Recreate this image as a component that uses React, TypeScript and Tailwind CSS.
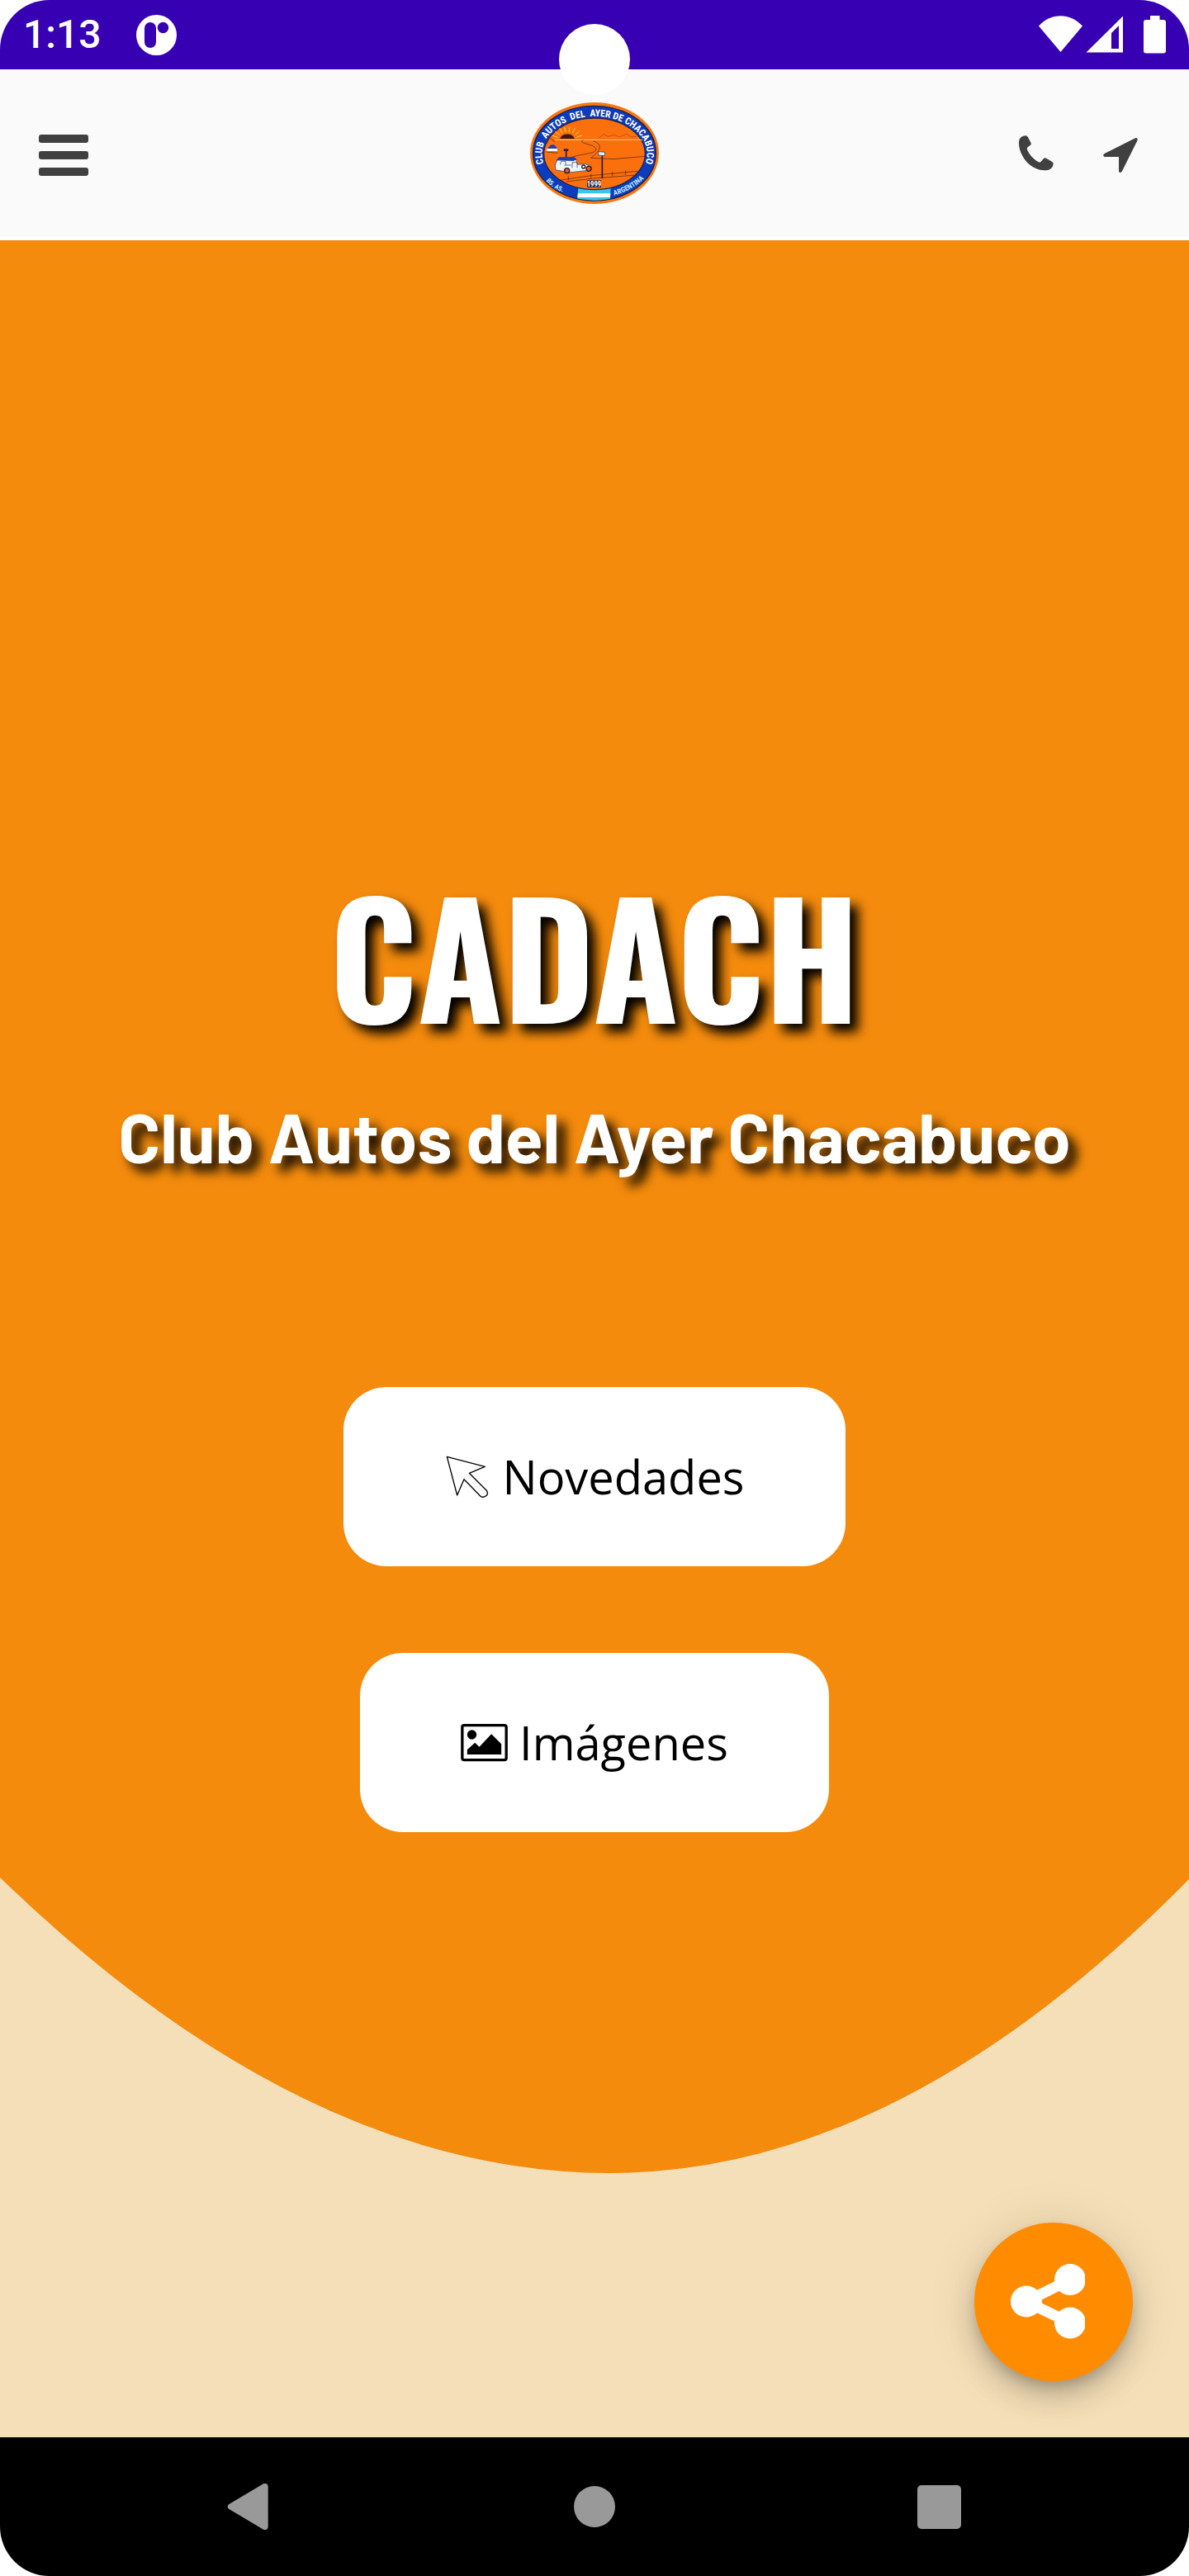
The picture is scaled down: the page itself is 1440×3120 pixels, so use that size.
import type { ReactNode } from "react";

function StatusBar() {
  return (
    <div className="flex h-[84px] items-center justify-between bg-[#3700b3] px-[28px] text-white">
      <div className="flex items-center gap-[42px]">
        <span className="font-['Roboto',sans-serif] text-[48px] font-medium leading-[56px]">1:13</span>
        <svg viewBox="0 0 49 49" className="size-[49px]" aria-hidden="true">
          <circle cx="24.5" cy="24.5" r="24.5" fill="#fff" />
          <rect x="10" y="9" width="14" height="31" rx="7" fill="#3700b3" />
          <circle cx="32.5" cy="15.5" r="6.7" fill="#3700b3" />
        </svg>
      </div>
      <svg viewBox="1258 19 154 46" className="h-[46px] w-[154px]" fill="#fff" aria-hidden="true">
        <path d="M1284.500 63 L1258 31.500 C1273 15 1296 15 1311 31.500 Z" />
        <path fillRule="evenodd" d="M1315.500 63.500 L1360 63.500 L1360 19.500 Z M1346 40 L1346 59 L1355 59 L1355 31 Z" />
        <path d="M1393 19 H1404.500 V24 H1409 Q1412 24 1412 27 V61.500 Q1412 64.500 1409 64.500 H1388 Q1385 64.500 1385 61.500 V27 Q1385 24 1388 24 H1393 Z" />
      </svg>
    </div>
  );
}

function ClubLogo() {
  return (
    <svg viewBox="69 372 468 369" className="h-[123px] w-[156px]" role="img" aria-label="Club Autos del Ayer de Chacabuco">
      <defs>
        <path id="arc-top" d="M125 608 A191 136 0 1 1 481 608" />
        <path id="arc-left" d="M127 657 Q152 687 192 699" />
        <path id="arc-right" d="M374 710 Q440 692 482 650" />
        <clipPath id="ring">
          <ellipse cx="303" cy="557" rx="222" ry="171" />
        </clipPath>
      </defs>
      <ellipse cx="303" cy="556.500" rx="234" ry="184.500" fill="#f9760f" />
      <ellipse cx="303" cy="557" rx="223" ry="172" fill="#0d3bbd" stroke="#15214e" strokeWidth="4" />
      <g clipPath="url(#ring)">
        <path d="M244 680 L362 680 L359 740 L239 740 Z" fill="#38c6ec" />
        <path d="M243 703 H361 L360 717 H241 Z" fill="#fff" />
      </g>
      <ellipse cx="303" cy="559" rx="184" ry="130" fill="#fb700d" stroke="#1b2354" strokeWidth="4" />
      <g stroke="#4a2012" fill="none" strokeWidth="2">
        <path d="M158 508 H478" stroke="#ffc17a" strokeWidth="3" />
        <path d="M262 508 C240 522 300 522 308 540 C312 560 262 556 212 574" />
        <path d="M300 512 C340 530 318 552 290 574 L372 578 L486 568" />
        <path d="M318 502 L336 488 L352 496 L374 490 L394 498 L420 486 L436 498 L456 496" stroke="#b5430a" />
        <path d="M170 500 L150 492 M176 490 L160 478 M186 483 L176 466 M198 480 L194 462 M210 480 L213 462 M222 483 L232 467 M232 490 L247 478 M238 498 L258 492" stroke="#ffd84a" strokeWidth="3" />
        <path d="M128 524 L140 500 L160 516 M128 552 L170 556" />
        <path d="M176 655 L290 638 L460 622 M200 660 L300 648 L455 636 M208 640 V655 M290 632 V648 M368 624 V640 M416 620 V636" />
      </g>
      <path d="M178 504 C184 482 224 482 230 504 Z" fill="#3a1a14" />
      <path d="M131 540 L146 526 H156 L169 540 Z" fill="#1c3fb4" />
      <path d="M129 540 H168 V549 H129 Z" fill="#fff" />
      <path d="M200 548 V574 M331 562 V648" stroke="#2c1a2c" strokeWidth="5" />
      <path d="M191 541 H208 V549 H191 Z" fill="#25254a" />
      <path d="M317 551 L341 553 L340 566 L318 564 Z" fill="#dff3fb" stroke="#25254a" strokeWidth="2" />
      <path d="M160 600 L168 580 H236 L242 598 L270 596 L292 606 L290 618 L218 626 L162 618 Z" fill="#eef6fb" stroke="#26305e" strokeWidth="2" />
      <path d="M164 583 L174 571 H230 L239 580 L226 585 Z" fill="#1c3fb4" />
      <path d="M178 598 L182 586 H198 V600 M222 610 V590 H240 V610 M194 600 H218" fill="none" stroke="#26305e" strokeWidth="2" />
      <g fill="#ef5a16" stroke="#1e1c38" strokeWidth="4">
        <circle cx="203" cy="620" r="9" />
        <circle cx="282" cy="613" r="9" />
        <circle cx="263" cy="606" r="6" fill="#eef6fb" />
      </g>
      <rect x="276" y="655" width="51" height="26" fill="#2b2440" />
      <g fill="#fff" className="font-['Roboto_Condensed','Liberation_Sans',sans-serif] font-bold">
        <text x="301.500" y="678" textAnchor="middle" fontSize="26">1999</text>
        <text fontSize="35" textAnchor="middle">
          <textPath href="#arc-top" startOffset="50%">{"CLUB\u00a0\u00a0AUTOS\u00a0 DEL\u00a0 AYER DE CHACABUCO"}</textPath>
        </text>
        <text fontSize="24" fill="#bfeaff">
          <textPath href="#arc-left">BS. AS.</textPath>
        </text>
        <text fontSize="26" fill="#bfeaff">
          <textPath href="#arc-right">ARGENTINA</textPath>
        </text>
      </g>
    </svg>
  );
}

function Header() {
  return (
    <header className="grid grid-cols-[1fr_auto_1fr] items-center border-b-4 border-white bg-[#fafafa] px-[47px] py-[40px]">
      <button type="button" aria-label="Menú" className="flex w-[60px] flex-col gap-[10px] pt-[5px]">
        <span className="h-[10px] rounded-[3px] bg-[#404040]" />
        <span className="h-[10px] rounded-[3px] bg-[#404040]" />
        <span className="h-[10px] rounded-[3px] bg-[#404040]" />
      </button>
      <a href="#inicio">
        <ClubLogo />
      </a>
      <div className="flex items-center justify-end gap-[58px] pr-[14px]">
        <a href="#telefono" aria-label="Llamar">
          <svg viewBox="160 487 132 132" className="size-[44px]" fill="#404040" aria-hidden="true">
            <path d="M188 488 Q193 488 196 494 L207 515 Q208 519 205 522 L195 530 Q191 534 193 539 C202 560 220 577 235 584 Q239 586 243 582 L253 571 Q257 567 262 570 L284 583 Q288 586 288 590 C287 606 276 614 256 614 C205 614 163 562 163 515 C163 499 171 488 188 488 Z" />
          </svg>
        </a>
        <a href="#ubicacion" aria-label="Cómo llegar">
          <svg viewBox="465 490 132 132" className="size-[44px] overflow-visible" fill="#404040" aria-hidden="true">
            <path d="M585 500 Q594 497 593 507 L537 620 Q534 626 529 625 Q525 624 525 619 L525 568 L473 568 Q469 567 469 562 Q469 558 473 556 Z" />
          </svg>
        </a>
      </div>
    </header>
  );
}

function HeroButton({ href, icon, children }: { href: string; icon: ReactNode; children: ReactNode }) {
  return (
    <a
      href={href}
      className="flex items-center gap-[14px] rounded-[52px] bg-white px-[122px] py-[66px] font-['Open_Sans',sans-serif] text-[56px] leading-[85px] text-black"
    >
      {icon}
      {children}
    </a>
  );
}

function CursorIcon() {
  return (
    <svg viewBox="24 30 168 168" className="size-[56px]" fill="none" stroke="#000" strokeWidth="4" strokeLinejoin="round" aria-hidden="true">
      <path d="M34 40 L172 76 L115 100 L177 162 Q185 172 178 181 Q167 191 156 184 L96 122 L71 180 Z" />
    </svg>
  );
}

function ImageIcon() {
  return (
    <svg viewBox="54 47 170 141" className="h-[47px] w-[57px]" aria-hidden="true">
      <rect x="59" y="55" width="160" height="126" rx="7" fill="none" stroke="#000" strokeWidth="10" />
      <circle cx="94" cy="89" r="17" />
      <path d="M77 161 V144 L105 118 L121 133 L165 87 L201 123 V161 Z" />
    </svg>
  );
}

function ShareButton() {
  return (
    <button
      type="button"
      aria-label="Compartir"
      className="size-[192px] rounded-full bg-[#ff8c00] shadow-[0_10px_18px_-4px_rgba(0,0,0,0.2),0_21px_35px_rgba(0,0,0,0.14),0_4px_63px_rgba(0,0,0,0.12)]"
    >
      <svg viewBox="0 0 192 192" className="size-full" aria-hidden="true">
        <defs>
          <clipPath id="share-box">
            <rect x="44" y="40" width="90" height="112" />
          </clipPath>
        </defs>
        <g clipPath="url(#share-box)" fill="#fff">
          <path d="M116 69 L63 95.500 L116 121.500" fill="none" stroke="#fff" strokeWidth="13" />
          <circle cx="63" cy="95.500" r="19" />
          <circle cx="116" cy="69" r="19" />
          <circle cx="116" cy="121.500" r="19" />
        </g>
      </svg>
    </button>
  );
}

function NavigationBar() {
  return (
    <nav aria-label="Sistema" className="flex h-[168px] items-center justify-center bg-black">
      <button type="button" aria-label="Atrás" className="flex w-[29%] justify-center">
        <svg viewBox="103 84 168 168" className="size-[56px]" fill="#999" aria-hidden="true">
          <path d="M238 85 Q243 82 249 85 Q255 88 255 94 V242 Q255 248 249 251 Q243 254 238 251 L112 176 Q108 173 108 168 Q108 163 112 160 Z" />
        </svg>
      </button>
      <button type="button" aria-label="Inicio" className="flex w-[29%] justify-center">
        <span className="size-[50px] rounded-full bg-[#999]" />
      </button>
      <button type="button" aria-label="Recientes" className="flex w-[29%] justify-center">
        <span className="size-[53px] rounded-[5px] bg-[#999]" />
      </button>
    </nav>
  );
}

export default function App() {
  return (
    <div className="bg-white">
      <div className="relative flex min-h-screen flex-col overflow-hidden rounded-[60px]">
        <StatusBar />
        <div className="absolute left-1/2 top-[29px] size-[86px] -translate-x-1/2 rounded-full bg-white" />
        <Header />
        <main id="inicio" className="flex flex-1 flex-col bg-[#f5dfb8]">
          <section className="flex flex-col items-center bg-[#f48b0d] pb-[55px] pt-[754px] text-center">
            <h1 className="font-['Oswald','Roboto_Condensed',sans-serif] text-[189px] font-bold leading-[220px] text-white [text-shadow:10px_10px_14px_#000]">
              CADACH
            </h1>
            <h2 className="mt-[61px] font-['Barlow','Roboto',sans-serif] text-[84px] font-bold leading-[100px] text-white [text-shadow:10px_10px_14px_#000]">
              Club Autos del Ayer Chacabuco
            </h2>
            <div className="mt-[254px] flex flex-col items-center gap-[105px]">
              <HeroButton href="#novedades" icon={<CursorIcon />}>
                Novedades
              </HeroButton>
              <HeroButton href="#imagenes" icon={<ImageIcon />}>
                Imágenes
              </HeroButton>
            </div>
          </section>
          <svg viewBox="0 0 1440 360" preserveAspectRatio="none" className="-mt-px block h-[360px] w-full" fill="#f48b0d" aria-hidden="true">
            <path d="M0 0 V1 Q369.500 359 739 359 Q1089.500 359 1440 3 V0 Z" />
          </svg>
          <div className="flex flex-1 items-end justify-end px-[68px] pb-[68px] pt-[58px]">
            <ShareButton />
          </div>
        </main>
        <NavigationBar />
      </div>
    </div>
  );
}
